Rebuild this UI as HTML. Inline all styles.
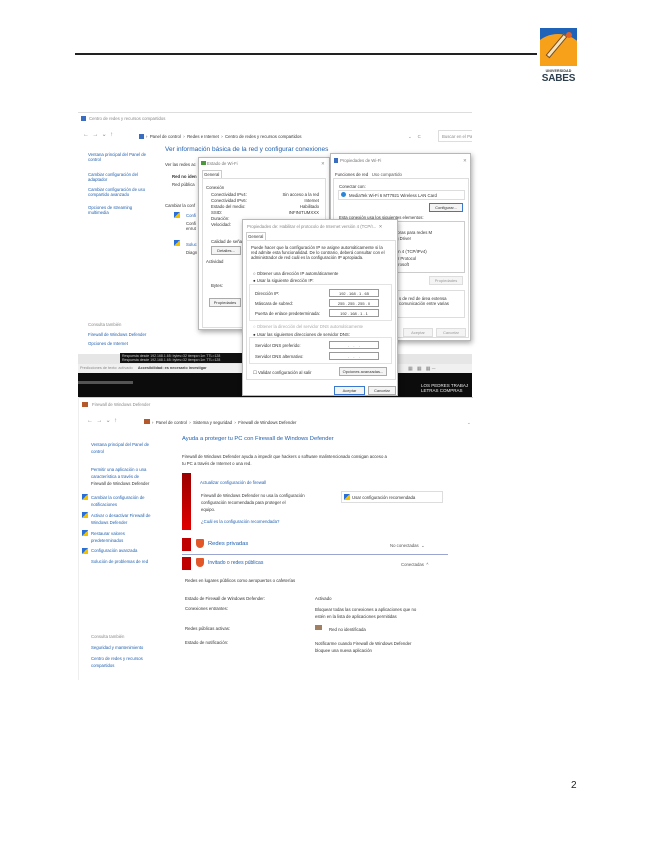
<!DOCTYPE html>
<html><head><meta charset="utf-8"><style>
*{margin:0;padding:0;box-sizing:border-box}
body{width:655px;height:848px;background:#fff;position:relative;overflow:hidden;font-family:"Liberation Sans",sans-serif}
.a{position:absolute}
.t{position:absolute;font-size:4.3px;line-height:5px;white-space:nowrap;color:#333}
.b{color:#1f5fae}
.g{color:#888}
.win{position:absolute;background:#fff;border:1px solid #b8b8b8;box-shadow:1px 2px 5px rgba(0,0,0,.35)}
.btn{position:absolute;border:1px solid #aaa;background:#f4f4f4;font-size:4px;line-height:7px;text-align:center;color:#333;white-space:nowrap}
.inp{position:absolute;border:1px solid #999;background:#fff;font-size:4px;line-height:7px;text-align:center;color:#333;white-space:nowrap}
.sh{position:absolute;width:6px;height:6px;background:linear-gradient(135deg,#2a6fd6 50%,#f2c200 50%)}
</style></head><body>

<!-- header -->
<div class="a" style="left:75px;top:53px;width:462px;height:2px;background:#222"></div>
<div class="a" style="left:540px;top:28px;width:37px;height:38px;background:#1e63b8;overflow:hidden">
 <div class="a" style="left:-12px;top:6px;width:60px;height:60px;border-radius:50%;background:#f7a11a"></div>
 <div class="a" style="left:14px;top:4px;width:5px;height:28px;background:#f4e2b8;transform:rotate(40deg);border:1px solid #7a4a1a"></div>
 <div class="a" style="left:26px;top:4px;width:6px;height:6px;border-radius:50%;background:#e0602a"></div>
</div>
<div class="a" style="left:538px;top:69px;width:41px;font-size:3.6px;font-weight:bold;text-align:center;color:#333;letter-spacing:.1px">UNIVERSIDAD</div>
<div class="a" style="left:538px;top:73px;width:41px;font-size:10px;font-weight:bold;text-align:center;color:#2d3e4e;letter-spacing:-.2px">SABES</div>

<!-- screenshot 1 -->
<div class="a" style="left:78px;top:112px;width:394px;height:286px;background:#e6e6e6;overflow:hidden">
 <div class="a" style="left:0;top:0;width:394px;height:242px;background:#fff;border-top:1px solid #ddd"></div>
 <div class="a" style="left:3px;top:4px;width:5px;height:5px;background:#3a6cc0"></div>
 <div class="t g" style="left:11px;top:4px">Centro de redes y recursos compartidos</div>
 <div class="t g" style="left:5px;top:21px;font-size:6px">←&nbsp; →&nbsp; ⌄&nbsp; ↑</div>
 <div class="a" style="left:61px;top:22px;width:5px;height:5px;background:#3a6cc0"></div>
 <div class="t" style="left:68px;top:22px">›&nbsp; Panel de control &nbsp;›&nbsp; Redes e Internet &nbsp;›&nbsp; Centro de redes y recursos compartidos</div>
 <div class="t g" style="left:330px;top:22px">⌄ &nbsp;&nbsp;&nbsp; C</div>
 <div class="a" style="left:360px;top:18px;width:40px;height:12px;border:1px solid #ddd"></div>
 <div class="t g" style="left:364px;top:22px">Buscar en el Pa</div>
 <div class="t b" style="left:10px;top:40px">Ventana principal del Panel de<br>control</div>
 <div class="t b" style="left:10px;top:60px">Cambiar configuración del<br>adaptador</div>
 <div class="t b" style="left:10px;top:75px">Cambiar configuración de uso<br>compartido avanzado</div>
 <div class="t b" style="left:10px;top:93px">Opciones de streaming<br>multimedia</div>
 <div class="t g" style="left:10px;top:210px">Consulta también</div>
 <div class="t b" style="left:10px;top:220px">Firewall de Windows Defender</div>
 <div class="t b" style="left:10px;top:229px">Opciones de Internet</div>
 <div class="t b" style="left:87px;top:34px;font-size:6.5px;line-height:7px">Ver información básica de la red y configurar conexiones</div>
 <div class="t" style="left:87px;top:50px">Ver las redes ac</div>
 <div class="t" style="left:94px;top:62px;font-weight:bold">Red no iden</div>
 <div class="t" style="left:94px;top:70px">Red pública</div>
 <div class="t" style="left:87px;top:91px">Cambiar la conf</div>
 <div class="sh" style="left:96px;top:100px"></div>
 <div class="t b" style="left:108px;top:101px">Confi</div>
 <div class="t" style="left:108px;top:109px">Confi<br>enrut</div>
 <div class="sh" style="left:96px;top:128px"></div>
 <div class="t b" style="left:108px;top:130px">Soluc</div>
 <div class="t" style="left:108px;top:138px">Diagn</div>
 <!-- bottom strips -->
 <div class="a" style="left:42px;top:241px;width:124px;height:10px;background:#111"></div>
 <div class="t" style="left:44px;top:242px;color:#ccc;font-size:3.5px;line-height:4px">Respuesta desde 192.168.1.65: bytes=32 tiempo&lt;1m TTL=128<br>Respuesta desde 192.168.1.65: bytes=32 tiempo&lt;1m TTL=128</div>
 <div class="a" style="left:0;top:252px;width:394px;height:9px;background:#f0f0f0"></div>
 <div class="t g" style="left:2px;top:254px;font-size:3.8px">Predicciones de texto: activado &nbsp;&nbsp;&nbsp; <b style="color:#444">Accesibilidad: es necesario investigar</b></div>
 <div class="a" style="left:0;top:261px;width:394px;height:25px;background:#0c0c0c"></div>
 <div class="a" style="left:0;top:269px;width:55px;height:3px;background:#555"></div>
 <div class="t" style="left:343px;top:271px;color:#eee;font-size:4.5px">LOS PEDRES TRABAJ<br>LETRAS COMPRAS</div>
 <div class="t g" style="left:330px;top:255px;font-size:5px">▦ &nbsp; ▦ &nbsp; ▦ ─</div>
</div>

<!-- Estado Wi-Fi -->
<div class="win" style="left:198px;top:157px;width:132px;height:173px">
 <div class="t" style="left:8px;top:3px;color:#777">Estado de Wi-Fi</div>
 <div class="a" style="left:2px;top:3px;width:5px;height:4px;background:#4a9a3a"></div>
 <div class="t g" style="left:122px;top:3px">✕</div>
 <div class="a" style="left:3px;top:12px;width:20px;height:8px;border:1px solid #ccc;border-bottom:none"></div>
 <div class="t" style="left:5px;top:14px">General</div>
 <div class="a" style="left:3px;top:20px;width:124px;height:150px;border:1px solid #ddd"></div>
 <div class="t" style="left:7px;top:27px">Conexión</div>
 <div class="t" style="left:12px;top:34px;line-height:6px">Conectividad IPv4:<br>Conectividad IPv6:<br>Estado del medio:<br>SSID:<br>Duración:<br>Velocidad:</div>
 <div class="t" style="left:78px;top:34px;line-height:6px;text-align:right;width:42px">Sin acceso a la red<br>Internet<br>Habilitado<br>INFINITUMXXX</div>
 <div class="t" style="left:12px;top:81px">Calidad de señal</div>
 <div class="btn" style="left:12px;top:88px;width:30px;height:9px">Detalles...</div>
 <div class="t" style="left:7px;top:101px">Actividad</div>
 <div class="t" style="left:12px;top:125px">Bytes:</div>
 <div class="btn" style="left:10px;top:140px;width:32px;height:9px">Propiedades</div>
</div>

<!-- Propiedades Wi-Fi -->
<div class="win" style="left:330px;top:153px;width:141px;height:188px">
 <div class="t" style="left:9px;top:4px;color:#777">Propiedades de Wi-Fi</div>
 <div class="a" style="left:3px;top:4px;width:4px;height:5px;background:#3a6cc0"></div>
 <div class="t g" style="left:132px;top:4px">✕</div>
 <div class="t" style="left:4px;top:18px">Funciones de red &nbsp; <span style="color:#555">Uso compartido</span></div>
 <div class="a" style="left:2px;top:24px;width:136px;height:160px;border:1px solid #ddd"></div>
 <div class="t" style="left:8px;top:30px">Conectar con:</div>
 <div class="a" style="left:7px;top:36px;width:127px;height:10px;border:1px solid #ddd"></div>
 <div class="a" style="left:10px;top:38px;width:5px;height:5px;border-radius:50%;background:#2a86d8"></div>
 <div class="t" style="left:18px;top:39px">MediaTek Wi-Fi 6 MT7921 Wireless LAN Card</div>
 <div class="btn" style="left:98px;top:49px;width:34px;height:9px;border-color:#3a78d0">Configurar...</div>
 <div class="t" style="left:8px;top:61px">Esta conexión usa los siguientes elementos:</div>
 <div class="a" style="left:7px;top:67px;width:127px;height:52px;border:1px solid #ccc"></div>
 <div class="t" style="left:40px;top:69px;line-height:6.5px">soft<br>icios e impresoras para redes M<br>ed Networking Driver<br>de QoS<br>Internet versión 4 (TCP/IPv4)<br>dor Multiplexor Protocol<br>r LLDP de Microsoft</div>
 <div class="t g" style="left:44px;top:125px">nstalar</div>
 <div class="btn" style="left:98px;top:122px;width:34px;height:9px;color:#999;border-color:#ddd">Propiedades</div>
 <div class="a" style="left:7px;top:136px;width:127px;height:28px;border:1px solid #ddd"></div>
 <div class="t" style="left:68px;top:142px">s de red de área extensa<br>comunicación entre varias</div>
 <div class="btn" style="left:72px;top:174px;width:30px;height:9px;color:#999;border-color:#ddd">Aceptar</div>
 <div class="btn" style="left:105px;top:174px;width:30px;height:9px;color:#999;border-color:#ddd">Cancelar</div>
</div>

<!-- IPv4 -->
<div class="win" style="left:242px;top:219px;width:156px;height:177px">
 <div class="t g" style="left:4px;top:4px">Propiedades de: Habilitar el protocolo de Internet versión 4 (TCP/I... &nbsp;✕</div>
 <div class="a" style="left:3px;top:12px;width:20px;height:8px;border:1px solid #ccc;border-bottom:none"></div>
 <div class="t" style="left:5px;top:14px">General</div>
 <div class="a" style="left:3px;top:20px;width:150px;height:140px;border:1px solid #ddd"></div>
 <div class="t" style="left:8px;top:25px;line-height:5px">Puede hacer que la configuración IP se asigne automáticamente si la<br>red admite esta funcionalidad. De lo contrario, deberá consultar con el<br>administrador de red cuál es la configuración IP apropiada.</div>
 <div class="t" style="left:10px;top:51px">○ Obtener una dirección IP automáticamente</div>
 <div class="t" style="left:10px;top:58px">● Usar la siguiente dirección IP:</div>
 <div class="a" style="left:6px;top:64px;width:143px;height:37px;border:1px solid #e3e3e3"></div>
 <div class="t" style="left:12px;top:71px">Dirección IP:</div>
 <div class="t" style="left:12px;top:81px">Máscara de subred:</div>
 <div class="t" style="left:12px;top:91px">Puerta de enlace predeterminada:</div>
 <div class="inp" style="left:86px;top:69px;width:50px;height:8px">192 . 168 . 1 . 65</div>
 <div class="inp" style="left:86px;top:79px;width:50px;height:8px">255 . 255 . 255 . 0</div>
 <div class="inp" style="left:86px;top:89px;width:50px;height:8px">192 . 168 . 1 . 1</div>
 <div class="t" style="left:10px;top:104px;color:#aaa">○ Obtener la dirección del servidor DNS automáticamente</div>
 <div class="t" style="left:10px;top:112px">● Usar las siguientes direcciones de servidor DNS:</div>
 <div class="a" style="left:6px;top:117px;width:143px;height:27px;border:1px solid #e3e3e3"></div>
 <div class="t" style="left:12px;top:123px">Servidor DNS preferido:</div>
 <div class="t" style="left:12px;top:134px">Servidor DNS alternativo:</div>
 <div class="inp" style="left:86px;top:121px;width:50px;height:8px">. &nbsp;&nbsp; . &nbsp;&nbsp; .</div>
 <div class="inp" style="left:86px;top:132px;width:50px;height:8px">. &nbsp;&nbsp; . &nbsp;&nbsp; .</div>
 <div class="t" style="left:10px;top:150px">☐ Validar configuración al salir</div>
 <div class="btn" style="left:96px;top:147px;width:48px;height:9px">Opciones avanzadas...</div>
 <div class="btn" style="left:91px;top:166px;width:31px;height:9px;border-color:#3a78d0">Aceptar</div>
 <div class="btn" style="left:125px;top:166px;width:28px;height:9px">Cancelar</div>
</div>

<!-- screenshot 2 -->
<div class="a" style="left:78px;top:397px;width:394px;height:283px;background:#fff;border-left:1px solid #eee">
 <div class="a" style="left:0;top:0;width:394px;height:1px;background:#ccc"></div>
 <div class="a" style="left:3px;top:5px;width:6px;height:5px;background:#b5582a"></div>
 <div class="t g" style="left:13px;top:5px">Firewall de Windows Defender</div>
 <div class="t g" style="left:8px;top:22px;font-size:6px">←&nbsp; →&nbsp; ⌄&nbsp; ↑</div>
 <div class="a" style="left:65px;top:22px;width:6px;height:5px;background:#b5582a"></div>
 <div class="t" style="left:73px;top:23px">›&nbsp; Panel de control &nbsp;›&nbsp; Sistema y seguridad &nbsp;›&nbsp; Firewall de Windows Defender</div>
 <div class="t g" style="left:388px;top:23px">⌄</div>
 <div class="t b" style="left:12px;top:44px;line-height:7px">Ventana principal del Panel de<br>control</div>
 <div class="t b" style="left:12px;top:69px;line-height:7px">Permitir una aplicación o una<br>característica a través de<br><span style="color:#333">Firewall de Windows Defender</span></div>
 <div class="sh" style="left:3px;top:97px"></div>
 <div class="t b" style="left:12px;top:97px;line-height:7px">Cambiar la configuración de<br>notificaciones</div>
 <div class="sh" style="left:3px;top:115px"></div>
 <div class="t b" style="left:12px;top:115px;line-height:7px">Activar o desactivar Firewall de<br>Windows Defender</div>
 <div class="sh" style="left:3px;top:133px"></div>
 <div class="t b" style="left:12px;top:133px;line-height:7px">Restaurar valores<br>predeterminados</div>
 <div class="sh" style="left:3px;top:151px"></div>
 <div class="t b" style="left:12px;top:151px">Configuración avanzada</div>
 <div class="t b" style="left:12px;top:162px">Solución de problemas de red</div>
 <div class="t g" style="left:12px;top:237px">Consulta también</div>
 <div class="t b" style="left:12px;top:248px">Seguridad y mantenimiento</div>
 <div class="t b" style="left:12px;top:258px;line-height:7px">Centro de redes y recursos<br>compartidos</div>
 <div class="t b" style="left:103px;top:39px;font-size:5.8px;line-height:7px">Ayuda a proteger tu PC con Firewall de Windows Defender</div>
 <div class="t" style="left:103px;top:56px;line-height:7px">Firewall de Windows Defender ayuda a impedir que hackers o software malintencionado consigan acceso a<br>tu PC a través de Internet o una red.</div>
 <div class="a" style="left:103px;top:76px;width:9px;height:57px;background:linear-gradient(#9a0000,#e00000)"></div>
 <div class="t b" style="left:121px;top:83px">Actualizar configuración de firewall</div>
 <div class="t" style="left:122px;top:95px;line-height:7px">Firewall de Windows Defender no usa la configuración<br>configuración recomendada para proteger el<br>equipo.</div>
 <div class="t b" style="left:122px;top:122px">¿Cuál es la configuración recomendada?</div>
 <div class="a" style="left:262px;top:94px;width:102px;height:12px;border:1px solid #ddd"></div>
 <div class="sh" style="left:265px;top:97px"></div>
 <div class="t" style="left:273px;top:98px">Usar configuración recomendada</div>
 <div class="a" style="left:103px;top:141px;width:9px;height:13px;background:#c00000"></div>
 <div class="a" style="left:117px;top:142px;width:8px;height:9px;background:#e2572a;border-radius:1px 1px 4px 4px"></div>
 <div class="t b" style="left:129px;top:145px;font-size:5.8px">Redes privadas</div>
 <div class="t" style="left:311px;top:146px;color:#555">No conectadas &nbsp;⌄</div>
 <div class="a" style="left:103px;top:157px;width:266px;height:1px;background:#9aa6d0"></div>
 <div class="a" style="left:103px;top:160px;width:9px;height:13px;background:#c00000"></div>
 <div class="a" style="left:117px;top:161px;width:8px;height:9px;background:#e2572a;border-radius:1px 1px 4px 4px"></div>
 <div class="t b" style="left:129px;top:164px;font-size:5px">Invitado o redes públicas</div>
 <div class="t" style="left:322px;top:165px;color:#555">Conectadas &nbsp;^</div>
 <div class="t" style="left:106px;top:181px">Redes en lugares públicos como aeropuertos o cafeterías</div>
 <div class="t" style="left:106px;top:199px">Estado de Firewall de Windows Defender:</div>
 <div class="t" style="left:236px;top:199px">Activado</div>
 <div class="t" style="left:106px;top:209px">Conexiones entrantes:</div>
 <div class="t" style="left:236px;top:209px;line-height:7px">Bloquear todas las conexiones a aplicaciones que no<br>estén en la lista de aplicaciones permitidas</div>
 <div class="t" style="left:106px;top:229px">Redes públicas activas:</div>
 <div class="a" style="left:236px;top:228px;width:7px;height:5px;background:#a08060"></div>
 <div class="t" style="left:250px;top:230px">Red no identificada</div>
 <div class="t" style="left:106px;top:243px">Estado de notificación:</div>
 <div class="t" style="left:236px;top:243px;line-height:7px">Notificarme cuando Firewall de Windows Defender<br>bloquee una nueva aplicación</div>
</div>

<div class="a" style="left:571px;top:780px;font-size:10px;color:#222">2</div>
</body></html>
